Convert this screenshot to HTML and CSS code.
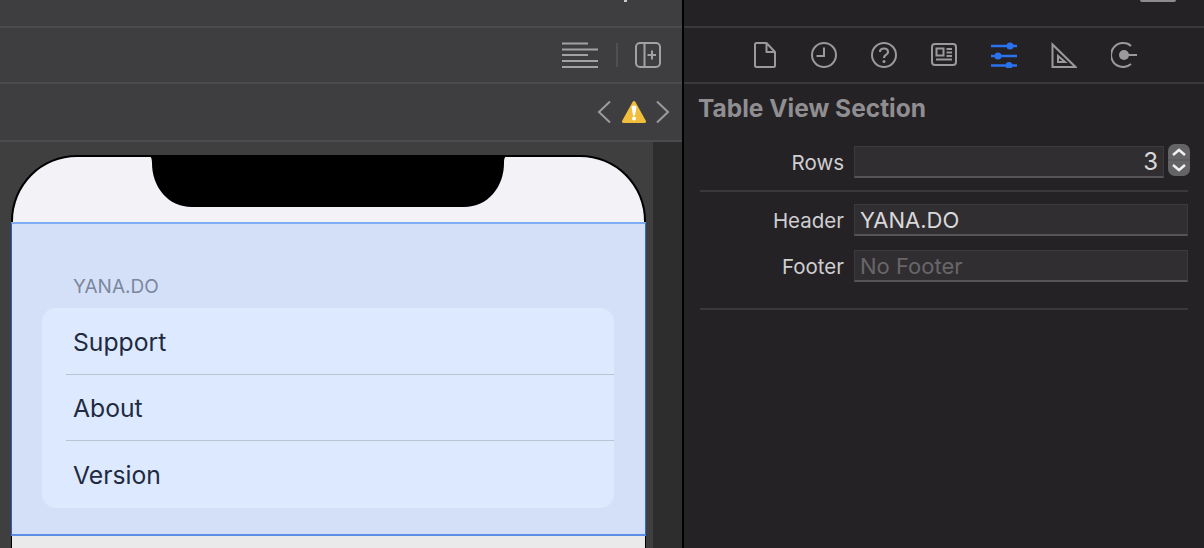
FILE: index.html
```html
<!DOCTYPE html>
<html lang="en">
<head>
    <meta charset="UTF-8">
    <title>Table View Section</title>
    <link rel="stylesheet" href="styles.css">
</head>
<body>

<div class="app">
    <div class="editor">
        <div class="bar bar-top"><span class="top-dot"></span></div>

        <div class="bar bar-tools">
            <svg class="icon-lines" width="36" height="26" viewBox="0 0 36 26">
                <path d="M0 1.500H26M0 7.500H36M0 13H26M0 19H36M0 25H36" stroke="#a2a1a3" stroke-width="2" fill="none"/>
            </svg>
            <span class="tool-divider"></span>
            <svg class="icon-add" width="26" height="26" viewBox="0 0 26 26">
                <rect x="1" y="1" width="24" height="24" rx="4" stroke="#a2a1a3" stroke-width="2" fill="none"/>
                <path d="M9.500 1V25M12.500 13H21M17 8.500V17.500" stroke="#a2a1a3" stroke-width="2" fill="none"/>
            </svg>
        </div>

        <div class="bar bar-issues">
            <svg width="14" height="24" viewBox="0 0 14 24">
                <path d="M13 1.500L2 12L13 22.500" stroke="#9c9b9d" stroke-width="2" fill="none"/>
            </svg>
            <svg class="icon-warning" width="24" height="24" viewBox="0 0 24 24">
                <path d="M12 2.500L22.500 21.500H1.500Z" fill="#f1bd3c" stroke="#f1bd3c" stroke-width="3" stroke-linejoin="round"/>
                <path d="M9.500 7Q9.500 5.500 12 5.500Q14.500 5.500 14.500 7L13 15.500H11Z" fill="#fff"/>
                <circle cx="12" cy="18.500" r="2" fill="#fff"/>
            </svg>
            <svg width="14" height="24" viewBox="0 0 14 24">
                <path d="M1 1.500L12 12L1 22.500" stroke="#9c9b9d" stroke-width="2" fill="none"/>
            </svg>
        </div>

        <div class="canvas">
            <div class="phone">
                <svg class="notch" width="364" height="53" viewBox="0 0 364 53">
                    <path d="M0 0H364C359 0 358 3 358 8C358 32 342 52 318 52H46C22 52 6 32 6 8C6 3 5 0 0 0Z" fill="#000"/>
                </svg>
                <div class="status-area"></div>
                <div class="section">
                    <div class="section-header">YANA.DO</div>
                    <div class="card">
                        <div class="row">Support</div>
                        <div class="row">About</div>
                        <div class="row">Version</div>
                    </div>
                </div>
                <div class="below"></div>
            </div>
            <div class="scroll-strip"></div>
        </div>
    </div>

    <div class="inspector">
        <div class="bar-top-right"><span class="top-tab"></span></div>

        <div class="tabs">
            <svg width="26" height="26" viewBox="0 0 26 26">
                <path transform="translate(1 0)" d="M4.500 1H14.500L23 10V23.500Q23 25 21.500 25H4.500Q3 25 3 23.500V2.500Q3 1 4.500 1ZM14.500 1V10H23" stroke="#9a999b" stroke-width="2" fill="none" stroke-linejoin="round"/>
            </svg>
            <svg width="26" height="26" viewBox="0 0 26 26">
                <circle cx="13" cy="13" r="12" stroke="#9a999b" stroke-width="2" fill="none"/>
                <path d="M13 5.500V14H5.500" stroke="#9a999b" stroke-width="2" fill="none"/>
            </svg>
            <svg width="26" height="26" viewBox="0 0 26 26">
                <circle cx="13" cy="13" r="12" stroke="#9a999b" stroke-width="2" fill="none"/>
                <path d="M9 10Q9 6.500 13 6.500Q17 6.500 17 10Q17 12 14.800 13Q13 14 13 16" stroke="#9a999b" stroke-width="2.200" fill="none"/>
                <circle cx="13" cy="19.500" r="1.500" fill="#9a999b"/>
            </svg>
            <svg width="26" height="24" viewBox="0 0 26 24">
                <rect x="1" y="1" width="24" height="21" rx="3" stroke="#9a999b" stroke-width="2" fill="none"/>
                <path d="M5.500 5.500H12.500V12.500H5.500ZM15.500 6H21M15.500 9.500H21M15.500 13H21M5 16.500H21" stroke="#9a999b" stroke-width="2" fill="none"/>
            </svg>
            <svg width="26" height="26" viewBox="0 0 26 26">
                <path d="M0 4H26M0 14H26M0 23.500H26" stroke="#2a72ee" stroke-width="2.500" fill="none"/>
                <circle cx="19" cy="4" r="3.500" fill="#2a72ee"/>
                <circle cx="7" cy="14" r="3.500" fill="#2a72ee"/>
                <circle cx="18" cy="23.500" r="3.500" fill="#2a72ee"/>
            </svg>
            <svg width="26" height="26" viewBox="0 0 26 26">
                <path d="M1.500 2.500V25H24.500ZM7 14V20H14Z" stroke="#9a999b" stroke-width="2" fill="none"/>
            </svg>
            <svg width="26" height="26" viewBox="0 0 26 26">
                <path d="M20 4Q17 1 13 1A12 12 0 1 0 20 22" stroke="#9a999b" stroke-width="2" fill="none"/>
                <circle cx="13" cy="13" r="5" fill="#9a999b"/>
                <path d="M13 13H26" stroke="#9a999b" stroke-width="2"/>
            </svg>
        </div>

        <h2 class="panel-title">Table View Section</h2>

        <div class="form-row">
            <label>Rows</label>
            <div class="field field-number">3</div>
            <div class="stepper">
                <svg width="22" height="32" viewBox="0 0 22 32">
                    <path d="M0 16H22" stroke="#555456" stroke-width="1"/>
                    <path d="M5 11L11 6L17 11M5 21L11 26L17 21" stroke="#f0f0f0" stroke-width="2.500" fill="none"/>
                </svg>
            </div>
        </div>
        <div class="separator"></div>

        <div class="form-row">
            <label>Header</label>
            <div class="field">YANA.DO</div>
        </div>
        <div class="form-row form-row-footer">
            <label>Footer</label>
            <div class="field field-empty">No Footer</div>
        </div>
        <div class="separator separator-last"></div>
    </div>
</div>

</body>
</html>
```

FILE: styles.css
```css
html, body {
    margin: 0;
    height: 548px;
    overflow: hidden;
}
body {
    font-family: Inter, "Liberation Sans", sans-serif;
    background: #252226;
}
.app {
    display: flex;
    height: 548px;
}

/* left side, the storyboard editor */
.editor {
    width: 682px;
    flex-shrink: 0;
    border-right: 2px solid #000;
    display: flex;
    flex-direction: column;
    background: #3e3d40;
}
.bar {
    display: flex;
    align-items: center;
    justify-content: flex-end;
    flex-shrink: 0;
    border-bottom: 2px solid #4b4a4d;
}
.bar-top {
    height: 26px;
    align-items: flex-start;
    padding-right: 55px;
}
.top-dot {
    width: 3px;
    height: 2px;
    background: #c9c8ca;
}
.bar-tools {
    height: 54px;
    padding-right: 21px;
}
.icon-add {
    margin-left: 17px;
}
.tool-divider {
    width: 2px;
    height: 24px;
    margin-left: 18px;
    background: #4f4e51;
}
.bar-issues {
    height: 56px;
    padding-right: 12px;
    gap: 11px;
}
.icon-warning {
    margin-right: -1px;
}
.canvas {
    flex: 1;
    min-height: 0;
    display: flex;
    background: #3f3f3f;
    padding-left: 11px;
}
.phone {
    position: relative;
    width: 635px;
    margin-top: 13px;
    display: flex;
    flex-direction: column;
}
.notch {
    position: absolute;
    top: 0;
    left: 135px;
    z-index: 1;
}
.status-area {
    height: 67px;
    flex-shrink: 0;
    box-sizing: border-box;
    background: #f2f2f7;
    border: solid #000;
    border-width: 2px 2px 0 2px;
    border-radius: 66px 66px 0 0;
}
.section {
    height: 314px;
    flex-shrink: 0;
    box-sizing: border-box;
    background: #d3e0f8;
    border-top: 2px solid #7fadf5;
    border-bottom: 2px solid #5c8fe8;
    border-left: 1px solid #2c5fb8;
    border-right: 1px solid #2a6bea;
    padding: 52px 31px 0 30px;
}
.section-header {
    font-size: 19px;
    line-height: 22px;
    color: #7c879e;
    padding-left: 31px;
    margin-bottom: 10px;
}
.card {
    background: #dce9fe;
    border-radius: 14px;
    padding: 1px 0 0 24px;
}
.row {
    height: 66px;
    display: flex;
    align-items: center;
    font-size: 24.700px;
    color: #1f2a40;
    padding-left: 7px;
    border-bottom: 1px solid #b9c3d4;
    box-sizing: border-box;
}
.row:last-child {
    border-bottom: none;
    height: 67px;
}
.below {
    flex: 1;
    background: #eaeaea;
    border: solid #000;
    border-width: 0 1px;
}
.scroll-strip {
    width: 29px;
    margin-left: 7px;
    background: #2d2d2d;
}

/* right side, the inspector */
.inspector {
    flex: 1;
    min-width: 0;
    color: #cfced0;
}
.bar-top-right {
    height: 26px;
    display: flex;
    justify-content: flex-end;
    padding-right: 28px;
    border-bottom: 2px solid #3a383b;
}
.top-tab {
    width: 36px;
    height: 2px;
    background: #8e8c8e;
    border-radius: 0 0 3px 3px;
}
.tabs {
    height: 54px;
    display: flex;
    align-items: center;
    gap: 34px;
    padding-left: 67px;
    border-bottom: 2px solid #3a383b;
}
.panel-title {
    margin: 0 0 0 14px;
    height: 62px;
    box-sizing: border-box;
    padding-bottom: 14px;
    display: flex;
    align-items: center;
    font-size: 24.500px;
    font-weight: 700;
    color: #908e91;
}
.form-row {
    display: flex;
    align-items: flex-start;
    padding-right: 16px;
}
.form-row label {
    width: 160px;
    height: 32px;
    line-height: 34px;
    text-align: right;
    font-size: 20.500px;
    margin-right: 10px;
    flex-shrink: 0;
}
.field {
    flex: 1;
    height: 32px;
    box-sizing: border-box;
    background: #312e32;
    border: 1px solid #3c3a3d;
    border-bottom: 2px solid #565458;
    font-size: 22px;
    line-height: 30px;
    padding-left: 5px;
    color: #d9d8da;
}
.field-number {
    flex: none;
    width: 310px;
    font-size: 24px;
    text-align: right;
    padding: 0 5px 0 0;
}
.field-empty {
    color: #686669;
}
.stepper {
    width: 22px;
    height: 32px;
    margin: -2px 0 0 4px;
    background: #646365;
    border-radius: 7px;
}
.stepper svg {
    display: block;
}
.separator {
    height: 2px;
    margin: 12px 16px;
    background: #3a383b;
}
.form-row-footer {
    margin-top: 14px;
}
.separator-last {
    margin-top: 26px;
}
```
